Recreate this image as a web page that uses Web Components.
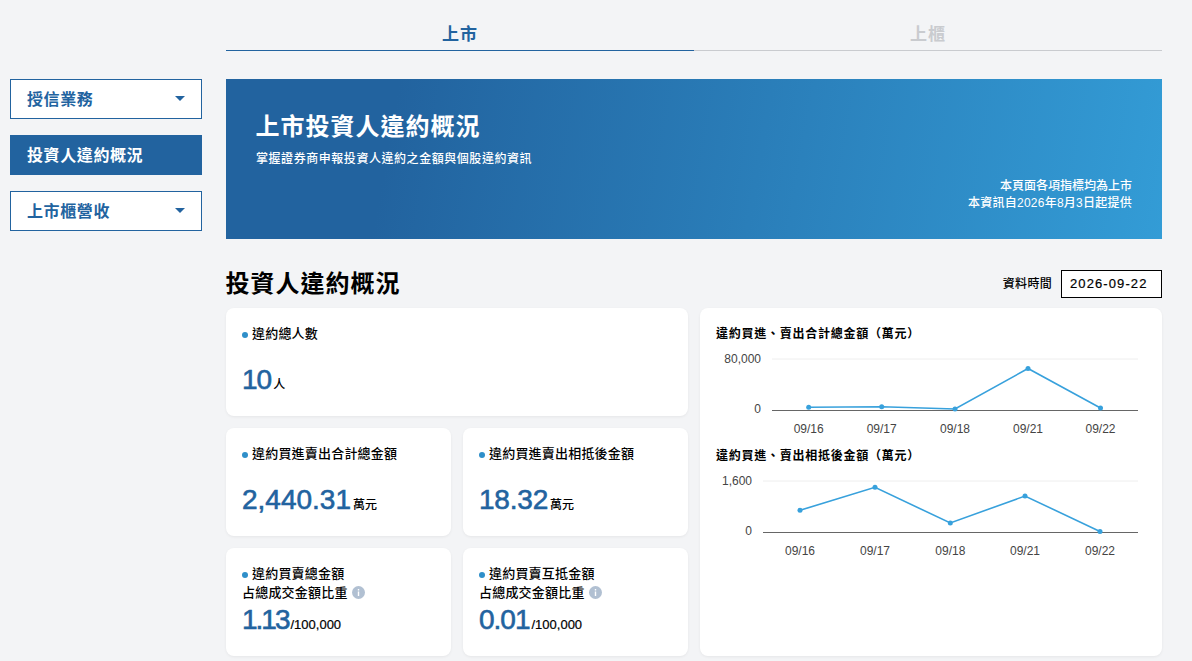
<!DOCTYPE html>
<html lang="zh-Hant">
<head>
<meta charset="utf-8">
<title>投資人違約概況</title>
<style>
html, body { margin: 0; padding: 0; height: 661px; overflow: hidden; background: #f3f4f6; }
body {
  font-family: "Liberation Sans", "Noto Sans CJK TC", sans-serif;
  color: #000;
}
</style>
</head>
<body>
<app-page>
  <market-tabs slot="tabs"></market-tabs>
  <div slot="nav">
    <nav-item label="授信業務" caret></nav-item>
    <nav-item label="投資人違約概況" active></nav-item>
    <nav-item label="上市櫃營收" caret></nav-item>
  </div>
  <hero-banner slot="hero"
    heading="上市投資人違約概況"
    sub="掌握證券商申報投資人違約之金額與個股違約資訊"
    note1="本頁面各項指標均為上市"
    note2="本資訊自2026年8月3日起提供"></hero-banner>
  <section-head slot="head" heading="投資人違約概況" time="2026-09-22"></section-head>
  <stat-grid slot="stats">
    <stat-card class="wide" value="10" unit="人" tracking="-1">違約總人數</stat-card>
    <stat-card value="2,440.31" unit="萬元">違約買進賣出合計總金額</stat-card>
    <stat-card value="18.32" unit="萬元" tracking="-.2">違約買進賣出相抵後金額</stat-card>
    <stat-card value="1.13" unit="/100,000" info latin tracking="-2">違約買賣總金額<br>占總成交金額比重</stat-card>
    <stat-card value="0.01" unit="/100,000" info latin tracking="-1">違約買賣互抵金額<br>占總成交金額比重</stat-card>
  </stat-grid>
  <chart-card slot="charts">
    <line-chart heading="違約買進、賣出合計總金額（萬元）" max="80,000" left="56"
      points="92.7,63.3 165.7,62.7 239,65 312,24.5 384.5,64"></line-chart>
    <line-chart heading="違約買進、賣出相抵後金額（萬元）" max="1,600" left="47"
      points="84,44.3 159,21.3 234.3,57 309,30 384,65.5"></line-chart>
  </chart-card>
</app-page>

<script>
const BLUE = "#22639f";

class AppPage extends HTMLElement {
  constructor() {
    super();
    this.attachShadow({ mode: "open" }).innerHTML = `
<style>
:host { display: grid; grid-template-columns: 192px 936px; column-gap: 24px; padding-left: 10px; }
.top { grid-column: 2; height: 51px; margin-bottom: 28px; }
.side { grid-column: 1; }
.main { grid-column: 2; }
.row { display: grid; grid-template-columns: 462px 462px; column-gap: 12px; }
</style>
<div class="top"><slot name="tabs"></slot></div>
<div class="side"><slot name="nav"></slot></div>
<div class="main">
  <slot name="hero"></slot>
  <slot name="head"></slot>
  <div class="row"><slot name="stats"></slot><slot name="charts"></slot></div>
</div>`;
  }
}

class MarketTabs extends HTMLElement {
  constructor() {
    super();
    this.attachShadow({ mode: "open" }).innerHTML = `
<style>
:host { display: grid; grid-template-columns: 1fr 1fr; height: 51px; }
div {
  display: flex; align-items: center; justify-content: center;
  padding-top: 14px; box-sizing: border-box; height: 51px;
  font-size: 17px; font-weight: 700; letter-spacing: 1px;
  color: #c9cbcf; border-bottom: 1px solid #c9cbcf;
}
.on { color: ${BLUE}; border-bottom-color: ${BLUE}; }
</style>
<div class="on">上市</div><div>上櫃</div>`;
  }
}

class NavItem extends HTMLElement {
  constructor() {
    super();
    this.attachShadow({ mode: "open" }).innerHTML = `
<style>
:host { display: block; margin-bottom: 16px; }
div {
  display: flex; align-items: center; justify-content: space-between;
  box-sizing: border-box; height: 40px; padding: 0 16px 2px 16px;
  background: #fff; border: 1px solid ${BLUE}; color: ${BLUE};
  font-size: 16px; font-weight: 700; letter-spacing: .6px;
}
:host([active]) div { background: ${BLUE}; color: #fff; }
i { display: none; width: 0; height: 0; border: 5px solid transparent; border-top: 5px solid ${BLUE}; border-bottom: 0; margin-right: 0; }
:host([caret]) i { display: block; }
</style>
<div><span></span><i></i></div>`;
    this.shadowRoot.querySelector("span").textContent = this.getAttribute("label");
  }
}

class HeroBanner extends HTMLElement {
  constructor() {
    super();
    this.attachShadow({ mode: "open" }).innerHTML = `
<style>
:host { display: block; }
.box {
  box-sizing: border-box; height: 160px; padding: 31px 30px 0;
  background: linear-gradient(100deg, #22639f 18%, #339cd6 100%);
  color: #fff; display: flex; flex-direction: column;
}
h1 { margin: 0 0 0 -.5px; font-size: 24px; line-height: 34px; font-weight: 700; letter-spacing: 1px; }
p { margin: 6px 0 0; font-size: 12px; line-height: 18px; font-weight: 500; letter-spacing: .55px; }
.note { margin-top: auto; padding-bottom: 27px; text-align: right; font-size: 12px; line-height: 17px; font-weight: 500; }
#b { letter-spacing: .25px; }
</style>
<div class="box">
  <h1 id="h"></h1><p id="s"></p>
  <div class="note"><div id="a"></div><div id="b"></div></div>
</div>`;
    var r = this.shadowRoot;
    r.getElementById("h").textContent = this.getAttribute("heading");
    r.getElementById("s").textContent = this.getAttribute("sub");
    r.getElementById("a").textContent = this.getAttribute("note1");
    r.getElementById("b").textContent = this.getAttribute("note2");
  }
}

class SectionHead extends HTMLElement {
  constructor() {
    super();
    this.attachShadow({ mode: "open" }).innerHTML = `
<style>
:host { display: flex; align-items: flex-end; height: 69px; box-sizing: border-box; padding-bottom: 10px; }
h2 { margin: 0 0 -3px -.5px; font-size: 24px; line-height: 34px; font-weight: 700; letter-spacing: 1px; }
.label { margin-left: auto; margin-right: 9px; font-size: 12px; font-weight: 500; line-height: 28px; letter-spacing: .3px; }
.date {
  box-sizing: border-box; width: 101px; height: 28px; border: 1px solid #000; background: #fff;
  font-size: 13px; line-height: 26px; padding-left: 8px; letter-spacing: 1.1px;
  -webkit-text-stroke: .2px #000;
}
</style>
<h2></h2><span class="label">資料時間</span><span class="date"></span>`;
    var r = this.shadowRoot;
    r.querySelector("h2").textContent = this.getAttribute("heading");
    r.querySelector(".date").textContent = this.getAttribute("time");
  }
}

class StatGrid extends HTMLElement {
  constructor() {
    super();
    this.attachShadow({ mode: "open" }).innerHTML = `
<style>
:host { display: grid; grid-template-columns: 225px 225px; grid-auto-rows: 108px; gap: 12px; }
::slotted(.wide) { grid-column: 1 / 3; }
</style>
<slot></slot>`;
  }
}

class StatCard extends HTMLElement {
  constructor() {
    super();
    this.attachShadow({ mode: "open" }).innerHTML = `
<style>
:host {
  display: block; box-sizing: border-box; height: 108px; padding: 16px 16px 0;
  background: #fff; border-radius: 8px; box-shadow: 0 1px 3px rgba(0,0,0,.06);
}
.label { font-size: 13px; line-height: 19px; font-weight: 500; letter-spacing: .2px; color: #000; height: 39px; }
.dot { display: inline-block; width: 6px; height: 6px; border-radius: 50%; background: #2f8fc9; margin-right: 4px; vertical-align: 0; }
.info { display: none; width: 13px; height: 13px; margin-left: 4px; vertical-align: -2px; }
:host([info]) .info { display: inline-block; }
.val { display: flex; align-items: baseline; }
b { font-size: 28px; line-height: 34px; font-weight: 400; color: ${BLUE}; -webkit-text-stroke: .6px ${BLUE}; }
.u { font-size: 12px; font-weight: 500; margin-left: 2px; }
:host([latin]) .u { font-size: 13px; font-weight: 400; -webkit-text-stroke: .2px #000; }
</style>
<div class="label"><span class="dot"></span><slot></slot><svg class="info" viewBox="0 0 13 13"><circle cx="6.5" cy="6.5" r="6.5" fill="#b1c0d2"/><rect x="5.8" y="5.5" width="1.4" height="4.5" fill="#fff"/><rect x="5.8" y="3" width="1.4" height="1.5" fill="#fff"/></svg></div>
<div class="val"><b></b><span class="u"></span></div>`;
    var r = this.shadowRoot;
    var b = r.querySelector("b");
    b.textContent = this.getAttribute("value");
    if (this.hasAttribute("tracking")) b.style.letterSpacing = this.getAttribute("tracking") + "px";
    r.querySelector(".u").textContent = this.getAttribute("unit");
  }
}

class ChartCard extends HTMLElement {
  constructor() {
    super();
    this.attachShadow({ mode: "open" }).innerHTML = `
<style>
:host {
  display: block; box-sizing: border-box; height: 348px; padding: 17px 24px 0 16px;
  background: #fff; border-radius: 8px; box-shadow: 0 1px 3px rgba(0,0,0,.06);
}
</style>
<slot></slot>`;
  }
}

const DAYS = ["09/16", "09/17", "09/18", "09/21", "09/22"];

class LineChart extends HTMLElement {
  constructor() {
    super();
    var left = +this.getAttribute("left");
    var pts = this.getAttribute("points").split(" ").map(p => p.split(",").map(Number));
    var dots = pts.map(p => `<circle cx="${p[0]}" cy="${p[1]}" r="2.5"/>`).join("");
    var days = pts.map((p, i) => `<text x="${p[0]}" y="89" text-anchor="middle">${DAYS[i]}</text>`).join("");
    this.attachShadow({ mode: "open" }).innerHTML = `
<style>
:host { display: block; height: 122px; }
h3 { margin: 0; font-size: 12px; line-height: 18px; font-weight: 700; letter-spacing: .75px; color: #000; }
svg { display: block; margin-top: 1px; width: 422px; height: 98px; overflow: visible; }
text { font-size: 12px; fill: #444; font-family: "Liberation Sans", sans-serif; }
polyline { fill: none; stroke: #38a1dc; stroke-width: 1.6; }
circle { fill: #38a1dc; }
</style>
<h3></h3>
<svg viewBox="0 0 422 98">
  <line x1="${left}" x2="422" y1="15" y2="15" stroke="#eee" stroke-width="1"/>
  <line x1="${left}" x2="422" y1="66.5" y2="66.5" stroke="#666" stroke-width="1"/>
  <text x="${left - 11}" y="19" text-anchor="end">${this.getAttribute("max")}</text>
  <text x="${left - 11}" y="69" text-anchor="end">0</text>
  <polyline points="${this.getAttribute("points")}"/>
  ${dots}${days}
</svg>`;
    this.shadowRoot.querySelector("h3").textContent = this.getAttribute("heading");
  }
}

customElements.define("app-page", AppPage);
customElements.define("market-tabs", MarketTabs);
customElements.define("nav-item", NavItem);
customElements.define("hero-banner", HeroBanner);
customElements.define("section-head", SectionHead);
customElements.define("stat-grid", StatGrid);
customElements.define("stat-card", StatCard);
customElements.define("chart-card", ChartCard);
customElements.define("line-chart", LineChart);
</script>
</body>
</html>
